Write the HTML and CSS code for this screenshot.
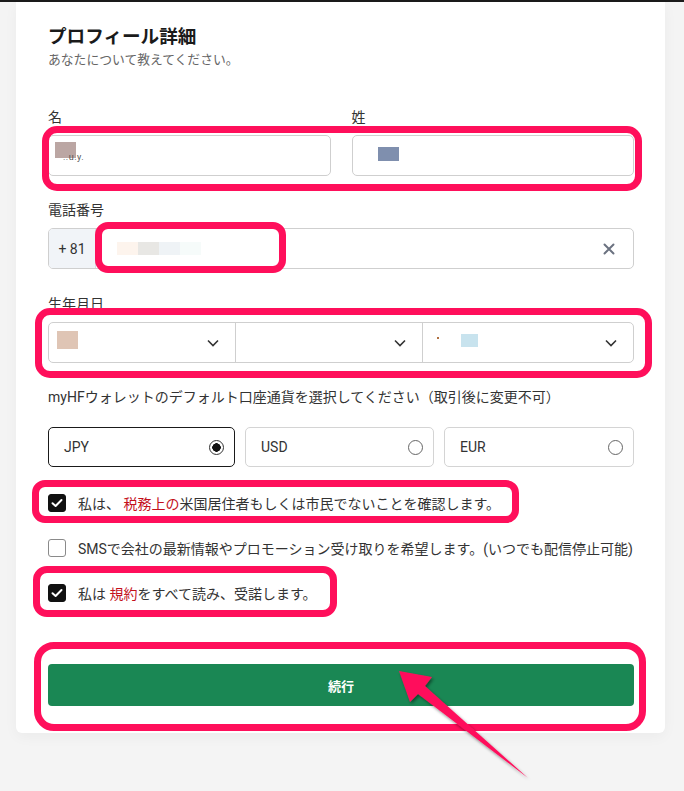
FILE: index.html
```html
<!DOCTYPE html>
<html lang="ja">
<head>
<meta charset="utf-8">
<title>プロフィール詳細</title>
<link rel="stylesheet" href="styles.css">
</head>
<body>
<div class="topbar"></div>
<main class="card">
  <h1 class="title">プロフィール詳細</h1>
  <p class="subtitle">あなたについて教えてください。</p>

  <div class="name-row">
    <div class="field">
      <label class="label">名</label>
      <div class="input">
        <span class="mask mask-first"></span><span class="ghost">..u.y.</span>
      </div>
    </div>
    <div class="field">
      <label class="label">姓</label>
      <div class="input">
        <span class="mask mask-last"></span>
      </div>
    </div>
  </div>

  <div class="field group">
    <label class="label">電話番号</label>
    <div class="phone">
      <span class="prefix">+ 81</span>
      <div class="phone-value">
        <span class="blob b1"></span><span class="blob b2"></span><span class="blob b3"></span><span class="blob b4"></span>
      </div>
      <svg class="clear" width="12" height="12" viewBox="0 0 12 12"><path d="M1.5 1.5 L10.5 10.5 M10.5 1.5 L1.5 10.5" stroke="#6b7280" stroke-width="2" stroke-linecap="round"/></svg>
    </div>
  </div>

  <div class="field group">
    <label class="label">生年月日</label>
    <div class="dates">
      <div class="seg"><span class="mask mask-d1"></span><svg class="chev" width="12" height="8" viewBox="0 0 12 8"><path d="M1 1.5 L6 6.5 L11 1.5" fill="none" stroke="#333" stroke-width="1.6"/></svg></div>
      <div class="seg"><span></span><svg class="chev" width="12" height="8" viewBox="0 0 12 8"><path d="M1 1.5 L6 6.5 L11 1.5" fill="none" stroke="#333" stroke-width="1.6"/></svg></div>
      <div class="seg"><span class="d3"><span class="dot"></span><span class="mask mask-d3"></span></span><svg class="chev" width="12" height="8" viewBox="0 0 12 8"><path d="M1 1.5 L6 6.5 L11 1.5" fill="none" stroke="#333" stroke-width="1.6"/></svg></div>
    </div>
  </div>

  <p class="currency-label">myHFウォレットのデフォルト口座通貨を選択してください（取引後に変更不可）</p>
  <div class="currencies">
    <div class="cur selected"><span>JPY</span><span class="radio on"></span></div>
    <div class="cur"><span>USD</span><span class="radio"></span></div>
    <div class="cur"><span>EUR</span><span class="radio"></span></div>
  </div>

  <div class="checks">
    <div class="check"><span class="box on"><svg width="12" height="10" viewBox="0 0 12 10"><path d="M1.5 5.2 L4.6 8 L10.5 2" fill="none" stroke="#fff" stroke-width="2" stroke-linecap="round" stroke-linejoin="round"/></svg></span><span class="text">私は、 <em class="red">税務上の</em>米国居住者もしくは市民でないことを確認します。</span></div>
    <div class="check"><span class="box"></span><span class="text">SMSで会社の最新情報やプロモーション受け取りを希望します。(いつでも配信停止可能)</span></div>
    <div class="check"><span class="box on"><svg width="12" height="10" viewBox="0 0 12 10"><path d="M1.5 5.2 L4.6 8 L10.5 2" fill="none" stroke="#fff" stroke-width="2" stroke-linecap="round" stroke-linejoin="round"/></svg></span><span class="text">私は <em class="red">規約</em>をすべて読み、受諾します。</span></div>
  </div>

  <button class="submit">続行</button>
</main>

<div class="hl hl-name"></div>
<div class="hl hl-phone"></div>
<div class="hl hl-date"></div>
<div class="hl hl-tax"></div>
<div class="hl hl-terms"></div>
<div class="hl hl-btn"></div>

<svg class="arrow" width="684" height="791" viewBox="0 0 684 791">
  <defs>
    <filter id="sh" x="-20%" y="-20%" width="140%" height="140%">
      <feDropShadow dx="1.5" dy="2" stdDeviation="1.5" flood-color="#000" flood-opacity="0.45"/>
    </filter>
  </defs>
  <polygon points="399,671 432,677 425,686 528,778 418,694 410,702" fill="#ff0f5b" filter="url(#sh)"/>
</svg>
</body>
</html>
```
FILE: styles.css
```css
* { box-sizing: border-box; }
html, body { margin: 0; padding: 0; }
body {
  position: relative;
  width: 684px;
  height: 791px;
  overflow: hidden;
  background: #f4f4f4;
  font-family: Roboto, "Noto Sans CJK JP", sans-serif;
  color: #333;
}
.topbar { height: 2px; background: #1b1b1b; }
.card {
  margin-left: 16px;
  width: 649px;
  background: #fff;
  padding: 24px 31px 27px 32px;
  border-radius: 0 0 6px 6px;
  box-shadow: 0 4px 14px rgba(0,0,0,0.04);
}
.title {
  margin: 0;
  font-size: 18.6px;
  line-height: 22px;
  font-weight: 700;
  color: #1a1a1a;
}
.subtitle {
  margin: 3px 0 0;
  font-size: 12.8px;
  line-height: 18px;
  color: #666;
}
.name-row {
  margin-top: 38px;
  display: grid;
  grid-template-columns: 1fr 1fr;
  column-gap: 21px;
}
.field { display: flex; flex-direction: column; }
.group { margin-top: 24px; }
.group + .group { margin-top: 25px; }
.label {
  font-size: 14px;
  line-height: 20px;
  margin-bottom: 8px;
  color: #333;
}
.input {
  height: 41px;
  border: 1px solid #cfcfcf;
  border-radius: 5px;
  display: flex;
  align-items: flex-start;
  position: relative;
}
.mask { display: inline-block; }
.mask-first { width: 21px; height: 16px; background: #bba6a3; margin: 6px 0 0 6px; }
.ghost { font-size: 9px; color: #555; margin: 16px 0 0 -13px; letter-spacing: 0.5px; }
.mask-last { width: 21px; height: 14px; background: #7f8fae; margin: 11px 0 0 25px; }

.phone {
  height: 41px;
  border: 1px solid #cfcfcf;
  border-radius: 5px;
  display: flex;
  align-items: center;
  overflow: hidden;
}
.prefix {
  width: 47px;
  height: 100%;
  background: #f1f4f8;
  border-right: 1px solid #d9dde2;
  display: flex;
  align-items: center;
  justify-content: center;
  font-size: 14px;
  color: #333;
}
.phone-value { flex: 1; display: flex; padding-left: 21px; }
.blob { display: inline-block; width: 21px; height: 13px; }
.b1 { background: #fdf4ed; }
.b2 { background: #e8e7e4; }
.b3 { background: #eff3f6; }
.b4 { background: #f6fbfa; }
.clear { margin-right: 18px; }

.dates {
  height: 41px;
  border: 1px solid #cfcfcf;
  border-radius: 5px;
  display: grid;
  grid-template-columns: 186px 187px 1fr;
}
.seg {
  display: flex;
  align-items: center;
  justify-content: space-between;
  padding-right: 16px;
  border-left: 1px solid #cfcfcf;
}
.seg:first-child { border-left: 0; }
.mask-d1 { width: 21px; height: 18px; background: #dfc5b5; margin: -5px 0 0 8px; }
.d3 { display: flex; align-items: center; margin: -5px 0 0 14px; }
.dot { width: 2px; height: 2px; background: #b07040; margin-right: 3px; margin-top: -5px; }
.mask-d3 { width: 17px; height: 13px; background: #c8e3ee; margin-left: 19px; }

.currency-label {
  margin: 24px 0 0;
  font-size: 14px;
  line-height: 20px;
  color: #333;
}
.currencies {
  margin-top: 20px;
  display: grid;
  grid-template-columns: 187px 189px 1fr;
  gap: 10px;
}
.cur {
  height: 40px;
  border: 1px solid #d4d4d4;
  border-radius: 5px;
  display: flex;
  align-items: center;
  justify-content: space-between;
  padding: 0 10px 0 15px;
  font-size: 14px;
  color: #333;
}
.cur.selected { border-color: #1a1a1a; }
.radio {
  width: 15px;
  height: 15px;
  border: 1.2px solid #666;
  border-radius: 50%;
  background: #fff;
}
.radio.on {
  border-color: #333;
  background: radial-gradient(circle, #111 0 4px, #fff 4.5px);
}

.checks {
  margin-top: 24px;
  display: flex;
  flex-direction: column;
  gap: 21px;
}
.check {
  height: 24px;
  display: flex;
  align-items: center;
  gap: 12px;
  font-size: 14px;
}
.box {
  width: 18px;
  height: 18px;
  border-radius: 3px;
  border: 1px solid #8a8a8a;
  background: #fff;
  display: flex;
  align-items: center;
  justify-content: center;
  flex: none;
}
.box.on { background: #111; border-color: #111; }
.text { color: #333; white-space: nowrap; }
.red { font-style: normal; color: #c4101c; }

.submit {
  margin-top: 59px;
  width: 100%;
  height: 42px;
  border: 0;
  border-radius: 4px;
  background: #1a8754;
  color: #fff;
  font-family: Roboto, "Noto Sans CJK JP", sans-serif;
  font-size: 13px;
  font-weight: 700;
  display: block;
}

.hl {
  position: absolute;
  border: 7px solid #ff0f5b;
  border-radius: 15px;
  pointer-events: none;
}
.hl-name { left: 42px; top: 126px; width: 600px; height: 65px; }
.hl-phone { left: 95px; top: 222px; width: 191px; height: 51px; border-radius: 13px; }
.hl-date { left: 35px; top: 308px; width: 617px; height: 70px; }
.hl-tax { left: 32px; top: 480px; width: 487px; height: 43px; border-radius: 13px; }
.hl-terms { left: 33px; top: 566px; width: 304px; height: 51px; border-radius: 14px; }
.hl-btn { left: 34px; top: 642px; width: 612px; height: 89px; border-radius: 20px; }
.arrow { position: absolute; left: 0; top: 0; pointer-events: none; }
```
